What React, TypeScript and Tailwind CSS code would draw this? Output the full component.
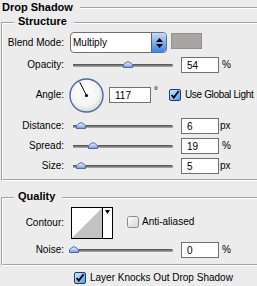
import React from 'react';

const Thumb = ({ pos }: { pos: number }) => (
  <svg className="absolute -top-[3px]" style={{ left: pos }} width="10" height="7" viewBox="0 0 10 7">
    <defs>
      <linearGradient id="thumbFill" x1="0" y1="0" x2="0" y2="1">
        <stop offset="0" stopColor="#eef3fc" />
        <stop offset="0.55" stopColor="#b4c8ee" />
        <stop offset="1" stopColor="#6f8fd6" />
      </linearGradient>
    </defs>
    <path d="M0.5 6.5 L0.5 4 Q0.5 3.2 1.5 2.6 L4 1 Q5 0.4 6 1 L8.5 2.6 Q9.5 3.2 9.5 4 L9.5 6.5 Z" fill="url(#thumbFill)" stroke="#4d6aa8" strokeWidth="1" />
  </svg>
);

const Slider = ({ pos }: { pos: number }) => (
  <div className="relative w-[100px] h-[3px] rounded-r-full bg-linear-to-b from-[#4b4b4b] via-[#7a7a7a] to-[#b4b4b4]">
    <Thumb pos={pos} />
  </div>
);

const Field = ({ value, w = 'w-[38px]' }: { value: string; w?: string }) => (
  <div className={`${w} h-[16px] shrink-0 border border-[#707070] bg-white pl-[5px] pt-[1px] flex items-center`}>
    {value}
  </div>
);

const Check = ({ on }: { on: boolean }) =>
  on ? (
    <svg width="12" height="12" viewBox="0 0 12 12" className="shrink-0">
      <defs>
        <linearGradient id="chkOn" x1="0" y1="0" x2="1" y2="1">
          <stop offset="0" stopColor="#d8ecfc" />
          <stop offset="1" stopColor="#4b98e4" />
        </linearGradient>
      </defs>
      <rect x="0.5" y="0.5" width="11" height="11" rx="1.5" fill="url(#chkOn)" stroke="#1f3d6a" />
      <path d="M2.6 6 L4.8 8.6 L9.6 2.2" fill="none" stroke="#000" strokeWidth="1.8" />
    </svg>
  ) : (
    <svg width="12" height="12" viewBox="0 0 12 12" className="shrink-0">
      <defs>
        <linearGradient id="chkOff" x1="0" y1="0" x2="1" y2="1">
          <stop offset="0" stopColor="#ffffff" />
          <stop offset="1" stopColor="#d4d4d4" />
        </linearGradient>
      </defs>
      <rect x="0.5" y="0.5" width="11" height="11" rx="2" fill="url(#chkOff)" stroke="#8a8a8a" />
    </svg>
  );

const Group = ({ title, children }: { title: string; children: React.ReactNode }) => (
  <div className="relative ml-[1px] border-t border-l border-b border-t-[#a3a3a3] border-l-[#a3a3a3] border-b-white">
    <span className="absolute -top-[8px] left-[12px] bg-[#ececec] pl-[4px] pr-[7px] text-[11px] leading-[13px] font-bold">
      {title}
    </span>
    <div className="border-t border-l border-b border-t-white border-l-white border-b-[#a3a3a3]">{children}</div>
  </div>
);

const Label = ({ children }: { children: React.ReactNode }) => (
  <span className="w-[61px] shrink-0 text-right">{children}</span>
);

const SliderRow = ({ label, pos, value, unit, unitGap }: { label: string; pos: number; value: string; unit: string; unitGap: string }) => (
  <div className="flex items-center h-[16px]">
    <Label>{label}</Label>
    <div className="ml-[9px]">
      <Slider pos={pos} />
    </div>
    <div className="ml-[8px]">
      <Field value={value} />
    </div>
    <span className={`${unitGap} self-start mt-[2px]`}>{unit}</span>
  </div>
);

const Dial = () => (
  <svg width="35" height="35" viewBox="0 0 35 35" className="shrink-0">
    <defs>
      <radialGradient id="dialFill" cx="0.45" cy="0.4" r="0.6">
        <stop offset="0" stopColor="#ffffff" />
        <stop offset="0.7" stopColor="#f4f4f4" />
        <stop offset="1" stopColor="#d6d6d6" />
      </radialGradient>
    </defs>
    <circle cx="17.5" cy="17.5" r="16.5" fill="url(#dialFill)" stroke="#4e6a9e" strokeWidth="1.4" />
    <line x1="17.5" y1="17.5" x2="10.7" y2="4.1" stroke="#000" strokeWidth="1" />
    <circle cx="17.5" cy="17.5" r="1.6" fill="#000" />
  </svg>
);

export default function App() {
  return (
    <div className="w-[257px] h-[286px] overflow-hidden bg-[#ececec] text-black text-[10px] leading-[12px] font-['Liberation_Sans',Arial,sans-serif] flex flex-col">
      {/* title */}
      <div className="mt-[1px] h-[13px] flex items-center pl-[2px]">
        <span className="text-[11px] leading-[13px] font-bold">Drop Shadow</span>
        <div className="ml-[7px] flex-1 h-[2px] border-t border-b border-t-[#a3a3a3] border-b-white" />
      </div>

      <div className="mt-[8px]">
        <Group title="Structure">
          <div className="pt-[8px] pb-[5px] flex flex-col">
            <div className="flex items-center h-[21px]">
              <Label>Blend Mode:</Label>
              <div className="ml-[6px] w-[97px] h-[21px] flex rounded-[4px] border border-[#6e6e6e] bg-white overflow-hidden">
                <span className="flex-1 pl-[2px] flex items-center">Multiply</span>
                <div className="w-[15px] flex flex-col items-center justify-center gap-[2px] bg-linear-to-b from-[#c4dcfa] via-[#7fb0ee] to-[#3f82e0] border-l border-[#3a66b0] rounded-r-[3px]">
                  <svg width="7" height="4" viewBox="0 0 7 4"><path d="M0 4 L3.5 0 L7 4 Z" fill="#000" /></svg>
                  <svg width="7" height="4" viewBox="0 0 7 4"><path d="M0 0 L3.5 4 L7 0 Z" fill="#000" /></svg>
                </div>
              </div>
              <div className="ml-[4px] self-start mt-[1px] w-[31px] h-[16px] bg-[#a9a5a5] border border-[#939090]" />
            </div>

            <div className="mt-[4px] flex items-center h-[16px]">
              <Label>Opacity:</Label>
              <div className="ml-[9px]">
                <Slider pos={50} />
              </div>
              <div className="ml-[8px]">
                <Field value="54" />
              </div>
              <span className="ml-[3px] self-start mt-[2px]">%</span>
            </div>

            <div className="mt-[5px] flex items-center h-[34px]">
              <Label>Angle:</Label>
              <div className="ml-[5px]">
                <Dial />
              </div>
              <div className="ml-[5px]">
                <Field value="117" w="w-[42px]" />
              </div>
              <span className="ml-[3px] self-start mt-[7px]">°</span>
              <div className="ml-[11px] flex items-center">
                <Check on />
                <span className="ml-[4px] tracking-[-0.35px] whitespace-nowrap">Use Global Light</span>
              </div>
            </div>

            <div className="mt-[6px] flex flex-col gap-[4px]">
              <SliderRow label="Distance:" pos={3} value="6" unit="px" unitGap="ml-[1px]" />
              <SliderRow label="Spread:" pos={15} value="19" unit="%" unitGap="ml-[3px]" />
              <SliderRow label="Size:" pos={3} value="5" unit="px" unitGap="ml-[1px]" />
            </div>
          </div>
        </Group>
      </div>

      <div className="mt-[16px]">
        <Group title="Quality">
          <div className="pt-[8px] pb-[6px] flex flex-col">
            <div className="flex items-center h-[32px]">
              <Label>Contour:</Label>
              <div className="ml-[7px] w-[42px] h-[32px] flex border border-black bg-white">
                <svg width="30" height="30" viewBox="0 0 30 30" className="shrink-0">
                  <path d="M0 30 L30 0 L30 30 Z" fill="#c3c3c3" />
                </svg>
                <div className="flex-1 border-l border-black flex justify-center pt-[2px]">
                  <svg width="5" height="4" viewBox="0 0 5 4"><path d="M0 0 L5 0 L2.5 4 Z" fill="#000" /></svg>
                </div>
              </div>
              <div className="ml-[14px] flex items-center -mt-[3px]">
                <Check on={false} />
                <span className="ml-[3px]">Anti-aliased</span>
              </div>
            </div>

            <div className="mt-[3px]">
              <SliderRow label="Noise:" pos={-4} value="0" unit="%" unitGap="ml-[3px]" />
            </div>
          </div>
        </Group>
      </div>

      <div className="mt-[6px] pl-[74px] flex items-center">
        <Check on />
        <span className="ml-[4px]">Layer Knocks Out Drop Shadow</span>
      </div>
    </div>
  );
}
